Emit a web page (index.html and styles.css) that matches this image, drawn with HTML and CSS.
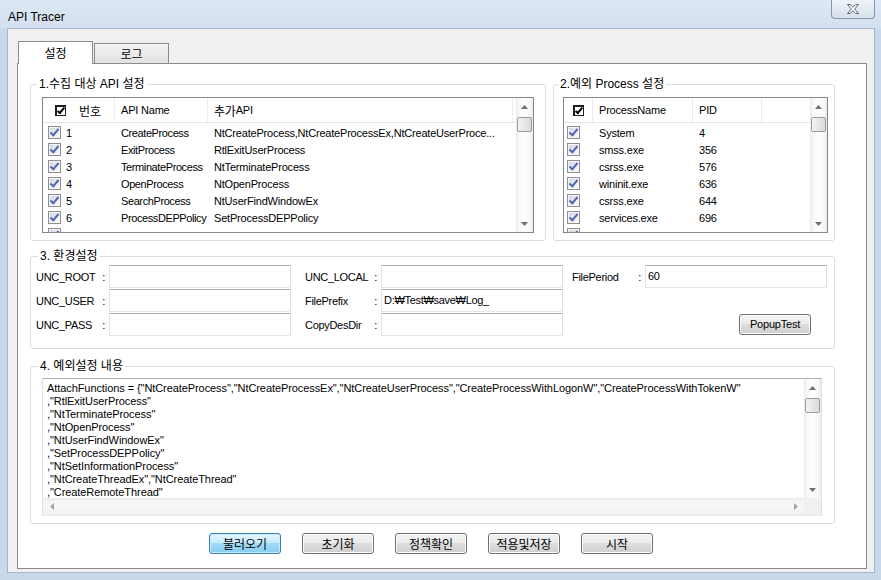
FILE: index.html
```html
<!DOCTYPE html>
<html lang="ko">
<head>
    <meta charset="UTF-8">
    <meta name="viewport" content="width=device-width, initial-scale=1.0">
    <title>API Tracer</title>
    <link rel="stylesheet" href="styles.css">
</head>
<body>
<div class="window">
    <div class="titlebar">
        <span class="title">API Tracer</span>
        <div class="close-btn">
            <svg width="12" height="10" viewBox="0 0 12 10"><polygon points="0.5,0.5 3.3,0.5 6,3.2 8.7,0.5 11.5,0.5 7.6,5 11.5,9.5 8.7,9.5 6,6.8 3.3,9.5 0.5,9.5 4.4,5" fill="#fff" stroke="#56657a" stroke-width="1"/></svg>
        </div>
    </div>

    <div class="client">
        <div class="tabs">
            <div class="tab active">설정</div>
            <div class="tab">로그</div>
        </div>

        <div class="tab-page">
            <div class="top-row">
                <!-- 1. API list -->
                <fieldset class="group group-api">
                    <legend>1.수집 대상 API 설정</legend>
                    <div class="listview">
                        <div class="list-main">
                            <div class="list-head">
                                <div class="hcell" style="width:72px"><span class="chk head"></span><span class="ko hnum">번호</span></div>
                                <div class="hcell" style="width:93px">API Name</div>
                                <div class="hcell" style="width:305px"><span class="ko">추가</span>API</div>
                            </div>
                            <div class="list-body">
                                <div class="row api-row"><span class="chk"></span><span>1</span><span class="name">CreateProcess</span><span>NtCreateProcess,NtCreateProcessEx,NtCreateUserProce...</span></div>
                                <div class="row api-row"><span class="chk"></span><span>2</span><span class="name">ExitProcess</span><span>RtlExitUserProcess</span></div>
                                <div class="row api-row"><span class="chk"></span><span>3</span><span class="name">TerminateProcess</span><span>NtTerminateProcess</span></div>
                                <div class="row api-row"><span class="chk"></span><span>4</span><span class="name">OpenProcess</span><span>NtOpenProcess</span></div>
                                <div class="row api-row"><span class="chk"></span><span>5</span><span class="name">SearchProcess</span><span>NtUserFindWindowEx</span></div>
                                <div class="row api-row"><span class="chk"></span><span>6</span><span class="name">ProcessDEPPolicy</span><span>SetProcessDEPPolicy</span></div>
                                <div class="row api-row"><span class="chk"></span></div>
                            </div>
                        </div>
                        <div class="vscroll">
                            <div class="sb-btn"><svg width="7" height="4" viewBox="0 0 7 4"><path d="M3.5 0L7 4H0Z"/></svg></div>
                            <div class="sb-track"><div class="sb-thumb"></div></div>
                            <div class="sb-btn"><svg width="7" height="4" viewBox="0 0 7 4"><path d="M0 0H7L3.5 4Z"/></svg></div>
                        </div>
                    </div>
                </fieldset>

                <!-- 2. process list -->
                <fieldset class="group group-proc">
                    <legend>2.예외 Process 설정</legend>
                    <div class="listview">
                        <div class="list-main">
                            <div class="list-head">
                                <div class="hcell hcell-chk" style="width:29px"><span class="chk head"></span></div>
                                <div class="hcell" style="width:100px">ProcessName</div>
                                <div class="hcell" style="width:69px">PID</div>
                            </div>
                            <div class="list-body">
                                <div class="row proc-row"><span class="chk"></span><span>System</span><span>4</span></div>
                                <div class="row proc-row"><span class="chk"></span><span>smss.exe</span><span>356</span></div>
                                <div class="row proc-row"><span class="chk"></span><span>csrss.exe</span><span>576</span></div>
                                <div class="row proc-row"><span class="chk"></span><span>wininit.exe</span><span>636</span></div>
                                <div class="row proc-row"><span class="chk"></span><span>csrss.exe</span><span>644</span></div>
                                <div class="row proc-row"><span class="chk"></span><span>services.exe</span><span>696</span></div>
                                <div class="row proc-row"><span class="chk"></span></div>
                            </div>
                        </div>
                        <div class="vscroll">
                            <div class="sb-btn"><svg width="7" height="4" viewBox="0 0 7 4"><path d="M3.5 0L7 4H0Z"/></svg></div>
                            <div class="sb-track"><div class="sb-thumb"></div></div>
                            <div class="sb-btn"><svg width="7" height="4" viewBox="0 0 7 4"><path d="M0 0H7L3.5 4Z"/></svg></div>
                        </div>
                    </div>
                </fieldset>
            </div>

            <!-- 3. environment -->
            <fieldset class="group group-env">
                <legend>3. 환경설정</legend>
                <div class="env">
                    <div class="env-col col-a">
                        <span class="lbl"><span>UNC_ROOT</span><span>:</span></span><div class="input"></div>
                        <span class="lbl"><span>UNC_USER</span><span>:</span></span><div class="input"></div>
                        <span class="lbl"><span>UNC_PASS</span><span>:</span></span><div class="input"></div>
                    </div>
                    <div class="env-col col-b">
                        <span class="lbl"><span>UNC_LOCAL</span><span>:</span></span><div class="input"></div>
                        <span class="lbl"><span>FilePrefix</span><span>:</span></span><div class="input">D:₩Test₩save₩Log_</div>
                        <span class="lbl"><span>CopyDesDir</span><span>:</span></span><div class="input"></div>
                    </div>
                    <div class="env-col col-c">
                        <span class="lbl"><span>FilePeriod</span><span>:</span></span><div class="input">60</div>
                        <span></span><span></span>
                        <span></span><div class="btn popup">PopupTest</div>
                    </div>
                </div>
            </fieldset>

            <!-- 4. detail text -->
            <fieldset class="group group-detail">
                <legend>4. 예외설정 내용</legend>
                <div class="memo">
<div class="memo-text">AttachFunctions = {"NtCreateProcess","NtCreateProcessEx","NtCreateUserProcess","CreateProcessWithLogonW","CreateProcessWithTokenW"
,"RtlExitUserProcess"
,"NtTerminateProcess"
,"NtOpenProcess"
,"NtUserFindWindowEx"
,"SetProcessDEPPolicy"
,"NtSetInformationProcess"
,"NtCreateThreadEx","NtCreateThread"
,"CreateRemoteThread"</div>
                    <div class="vscroll">
                        <div class="sb-btn"><svg width="7" height="4" viewBox="0 0 7 4"><path d="M3.5 0L7 4H0Z"/></svg></div>
                        <div class="sb-track"><div class="sb-thumb"></div></div>
                        <div class="sb-btn"><svg width="7" height="4" viewBox="0 0 7 4"><path d="M0 0H7L3.5 4Z"/></svg></div>
                    </div>
                    <div class="hscroll">
                        <div class="sb-btn"><svg width="4" height="7" viewBox="0 0 4 7"><path d="M0 3.5L4 0V7Z"/></svg></div>
                        <div class="sb-track"></div>
                        <div class="sb-btn"><svg width="4" height="7" viewBox="0 0 4 7"><path d="M0 0L4 3.5L0 7Z"/></svg></div>
                    </div>
                    <div class="corner"></div>
                </div>
            </fieldset>

            <div class="buttons">
                <div class="btn default">불러오기</div>
                <div class="btn">초기화</div>
                <div class="btn">정책확인</div>
                <div class="btn">적용및저장</div>
                <div class="btn">시작</div>
            </div>
        </div>
    </div>
</div>
</body>
</html>
```

FILE: styles.css
```css
/* ======= General ======= */
body {
    margin: 0;
    background: #c9d8ea;
    font-family: "Liberation Sans", "Noto Sans CJK KR", sans-serif;
    font-size: 11px;
    color: #000;
}

.ko {
    font-family: "Noto Sans CJK KR", sans-serif;
    font-size: 12px;
}

/* ======= Window frame ======= */
.window {
    width: 881px;
    height: 580px;
    display: flex;
    flex-direction: column;
    background: linear-gradient(to bottom, #dee8f4 0, #d3e0ef 28px, #c9d8eb 29px, #c9d8eb 100%);
}

.titlebar {
    height: 28px;
    display: flex;
    align-items: flex-start;
    flex-shrink: 0;
}

.title {
    flex: 1;
    padding: 10px 0 0 8px;
    font-size: 12px;
    line-height: 14px;
}

.close-btn {
    width: 44px;
    height: 19px;
    margin-right: 6px;
    box-sizing: border-box;
    border: 1px solid #8596ab;
    border-top: none;
    border-radius: 0 0 4px 4px;
    background: linear-gradient(#eef3f9, #d6e0eb);
    display: flex;
    align-items: center;
    justify-content: center;
}

.client {
    flex: 1;
    margin: 0 6px 7px 7px;
    border: 1px solid #a6b6ca;
    background: #f0f0f0;
    padding: 12px 0 0 9px;
}

/* ======= Tabs ======= */
.tabs {
    display: flex;
    align-items: flex-end;
    height: 22px;
    margin-left: 1px;
}

.tab {
    width: 75px;
    height: 20px;
    box-sizing: border-box;
    border: 1px solid #898c95;
    border-bottom: none;
    background: linear-gradient(#f3f3f3, #e2e2e2);
    text-align: center;
    font-family: "Noto Sans CJK KR", sans-serif;
    font-size: 12px;
    line-height: 19px;
}

.tab + .tab {
    margin-left: 1px;
}

.tab.active {
    height: 23px;
    margin-bottom: -1px;
    background: #fff;
    line-height: 21px;
    position: relative;
    z-index: 1;
}

.tab-page {
    width: 850px;
    height: 506px;
    box-sizing: border-box;
    border: 1px solid #898c95;
    background: #fff;
    padding: 13px 0 0 12px;
}

/* ======= Group boxes ======= */
.top-row {
    display: flex;
    gap: 7px;
}

.group {
    margin: 0;
    padding: 0;
    min-width: 0;
    box-sizing: border-box;
    border: 1px solid #d5dfe5;
    border-radius: 3px;
}

.group legend {
    padding: 0 2px;
    font-size: 12px;
    line-height: 14px;
}

.group-api {
    width: 516px;
    padding: 6px 0 7px;
}

.group-api legend { margin-left: 6px; }
.group-api .listview { margin: 0 11px; }

.group-proc {
    width: 282px;
    padding: 6px 0 7px;
}

.group-proc legend { margin-left: 4px; }
.group-proc .listview { margin: 0 6px 0 9px; }

.group-env {
    width: 805px;
    margin-top: 8px;
    padding: 2px 0 12px;
}

.group-env legend { margin-left: 7px; }

.group-detail {
    width: 805px;
    margin-top: 10px;
    padding: 5px 0 7px;
}

.group-detail legend { margin-left: 7px; }

/* ======= List views ======= */
.listview {
    display: flex;
    height: 136px;
    box-sizing: border-box;
    border: 1px solid #828790;
    background: #fff;
}

.list-main {
    flex: 1;
    overflow: hidden;
    letter-spacing: -0.2px;
}

.list-head {
    display: flex;
    height: 25px;
    box-sizing: border-box;
    border-bottom: 1px solid #e5e5e5;
}

.hcell {
    height: 24px;
    box-sizing: border-box;
    border-right: 1px solid #ececec;
    padding-left: 6px;
    display: flex;
    align-items: center;
    white-space: nowrap;
}

.hcell .chk.head { margin-left: 6px; }
.hcell-chk .chk.head { margin-left: 3px; }

.hnum {
    margin-left: 13px;
    letter-spacing: 0;
}

.list-body {
    padding-top: 1px;
}

.row {
    display: grid;
    height: 17px;
    align-items: center;
    white-space: nowrap;
}

.row .name {
    letter-spacing: -0.4px;
}

.api-row {
    grid-template-columns: 18px 55px 93px 1fr;
    padding-left: 5px;
}

.proc-row {
    grid-template-columns: 32px 100px 1fr;
    padding-left: 3px;
}

/* ======= Check boxes ======= */
.chk {
    position: relative;
    display: block;
    width: 13px;
    height: 13px;
    box-sizing: border-box;
    border: 1px solid #8f8f8f;
    background: linear-gradient(135deg, #cdd2e0 0%, #e9ecf3 55%, #fcfcfc 100%);
    box-shadow: inset 0 0 0 1px #f6f6f6;
}

.chk::after {
    content: "";
    position: absolute;
    left: 3px;
    top: 0;
    width: 3px;
    height: 7px;
    border: solid #5366b0;
    border-width: 0 2px 2px 0;
    transform: rotate(40deg);
}

.chk.head {
    width: 11px;
    height: 11px;
    border: solid #1e1e1e;
    border-width: 2px 1px 1px 2px;
    background: #fff;
    box-shadow: none;
}

.chk.head::after {
    left: 2px;
    top: -1px;
    width: 2px;
    height: 6px;
    border-color: #000;
}

/* ======= Scroll bars ======= */
.vscroll {
    width: 17px;
    display: flex;
    flex-direction: column;
    background: linear-gradient(to right, #eaeaea, #f8f8f8 3px, #fdfdfd 50%, #f8f8f8 14px, #eaeaea);
}

.sb-btn {
    height: 17px;
    flex-shrink: 0;
    display: flex;
    align-items: center;
    justify-content: center;
}

.sb-btn svg {
    fill: #6f6f6f;
}

.sb-track {
    flex: 1;
}

.sb-thumb {
    height: 15px;
    margin: 2px 1px 0;
    box-sizing: border-box;
    border: 1px solid #9b9b9b;
    border-radius: 2px;
    background: linear-gradient(to right, #f4f4f4, #e6e6e6 50%, #dadada);
}

.hscroll {
    display: flex;
    background: linear-gradient(#eaeaea, #f5f5f5 3px, #f7f7f7 50%, #f0f0f0);
}

.hscroll .sb-btn {
    width: 17px;
}

.hscroll .sb-btn svg {
    fill: #a5a5a5;
}

.corner {
    background: #f0f0f0;
}

/* ======= Environment grid ======= */
.env {
    display: flex;
    margin: 0 6px 0 5px;
}

.env-col {
    display: grid;
    grid-template-rows: 23px 23px 23px;
    row-gap: 1px;
    align-items: center;
}

.col-a { grid-template-columns: 73px 182px; }
.col-b { grid-template-columns: 76px 182px; margin-left: 14px; }
.col-c { grid-template-columns: 73px 182px; margin-left: 9px; }

.lbl {
    display: flex;
    justify-content: space-between;
    padding-right: 1px;
    margin-right: 3px;
    letter-spacing: -0.3px;
}

.input {
    height: 23px;
    box-sizing: border-box;
    border: 1px solid;
    border-color: #abadb3 #dbdfe6 #e3e9ef #e2e3ea;
    background: #fff;
    padding-left: 2px;
    line-height: 21px;
    letter-spacing: -0.3px;
    white-space: nowrap;
}

/* ======= Memo ======= */
.memo {
    display: grid;
    grid-template-columns: 1fr 17px;
    grid-template-rows: 1fr 17px;
    height: 138px;
    margin: 0 12px 0 11px;
    box-sizing: border-box;
    border: 1px solid;
    border-color: #abadb3 #dbdfe6 #e3e9ef #e2e3ea;
    background: #fff;
}

.memo-text {
    padding: 3px 0 0 4px;
    line-height: 13px;
    white-space: pre;
    overflow: hidden;
    letter-spacing: -0.08px;
}

/* ======= Buttons ======= */
.buttons {
    display: flex;
    gap: 21px;
    margin-top: 9px;
    padding-left: 179px;
}

.btn {
    width: 72px;
    height: 21px;
    box-sizing: border-box;
    border: 1px solid #707070;
    border-radius: 3px;
    background: linear-gradient(#f2f2f2 0%, #ebebeb 49%, #dddddd 50%, #cfcfcf 100%);
    box-shadow: inset 0 0 0 1px #fcfcfc;
    text-align: center;
    font-family: "Noto Sans CJK KR", sans-serif;
    font-size: 12px;
    line-height: 19px;
}

.btn.default {
    border-color: #3c7fb1;
    background: linear-gradient(#e8f6fd 0%, #c4e9fb 49%, #a2daf5 50%, #86cdef 100%);
    box-shadow: inset 0 0 0 1px #c5ecfd;
}

.btn.popup {
    height: 21px;
    margin-left: 94px;
    align-self: start;
    margin-top: 1px;
    font-family: "Liberation Sans", sans-serif;
    font-size: 11px;
    letter-spacing: -0.2px;
}
```
